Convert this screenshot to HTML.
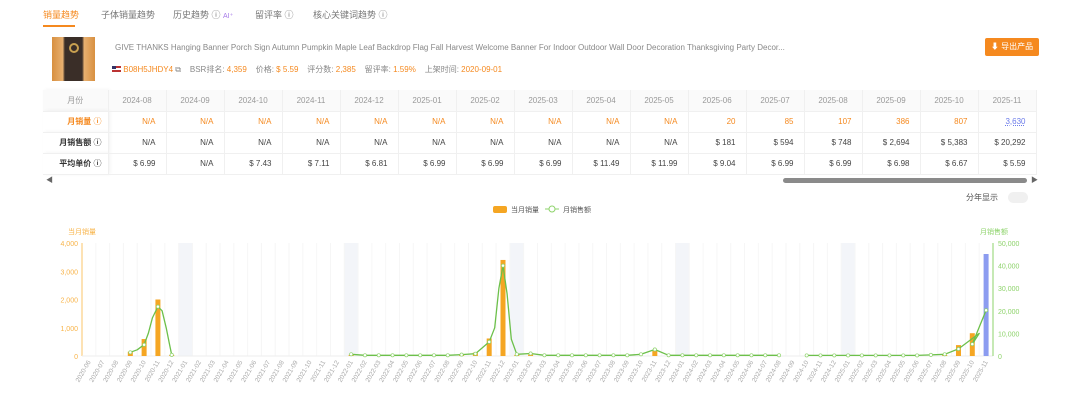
<!DOCTYPE html>
<html><head><meta charset="utf-8"><style>
*{margin:0;padding:0;box-sizing:border-box}
body{width:1080px;height:402px;background:#fff;font-family:"Liberation Sans","Noto Sans CJK SC",sans-serif;position:relative;overflow:hidden;color:#666}
.abs{position:absolute;white-space:nowrap}
.tab{font-size:9px;color:#777;top:8px}
.o{color:#f5891f}
table{border-collapse:collapse;position:absolute;left:43px;top:90px;font-size:8px}
td{height:21px;width:58px;text-align:right;padding-right:10px;border-right:1px solid #f0f0f0;border-bottom:1px solid #f0f0f0;color:#444}
tr:first-child td{background:#fafafa;color:#999;text-align:center;padding:0}
td.h{width:65px;text-align:right;padding-right:6px;font-weight:bold;color:#333;background:#fff;box-shadow:2px 0 4px rgba(0,0,0,.06)}
tr.r1 td{color:#f5891f}
</style></head><body>
<div class="abs tab o" style="left:43px">销量趋势</div>
<div style="position:absolute;left:43px;top:25px;width:32px;height:2px;background:#f5891f"></div>
<div class="abs tab" style="left:101px">子体销量趋势</div>
<div class="abs tab" style="left:173px">历史趋势 ⓘ <span style="color:#a77be8;font-size:7px">AI⁺</span></div>
<div class="abs tab" style="left:255px">留评率 ⓘ</div>
<div class="abs tab" style="left:313px">核心关键词趋势 ⓘ</div>
<div style="position:absolute;left:52px;top:37px;width:43px;height:44px;background:linear-gradient(90deg,#d89040,#e7b070 25%,#3a2e28 30%,#3a2e28 70%,#e7b070 75%,#d89040)"><div style="position:absolute;left:17px;top:6px;width:10px;height:10px;border-radius:50%;border:2px solid #c8a050"></div></div>
<div class="abs" style="left:115px;top:43px;font-size:8px;color:#888">GIVE THANKS Hanging Banner Porch Sign Autumn Pumpkin Maple Leaf Backdrop Flag Fall Harvest Welcome Banner For Indoor Outdoor Wall Door Decoration Thanksgiving Party Decor...</div>
<div class="abs" style="left:112px;top:64px;font-size:8px;color:#888"><span style="display:inline-block;width:9px;height:6px;background:linear-gradient(#b33 0 33%,#fff 33% 66%,#b33 66%);position:relative"><span style="position:absolute;left:0;top:0;width:4px;height:3px;background:#336"></span></span> <span class="o">B08H5JHDY4</span> ⧉ &nbsp;&nbsp; BSR排名: <span class="o">4,359</span> &nbsp;&nbsp; 价格: <span class="o">$ 5.59</span> &nbsp;&nbsp; 评分数: <span class="o">2,385</span> &nbsp;&nbsp; 留评率: <span class="o">1.59%</span> &nbsp;&nbsp; 上架时间: <span class="o">2020-09-01</span></div>
<div class="abs" style="left:985px;top:38px;width:54px;height:18px;background:#f5891f;border-radius:2px;color:#fff;font-size:8px;line-height:18px;text-align:center">⬇ 导出产品</div>
<table>
<tr><td class="h" style="text-align:center;color:#999;font-weight:normal;background:#fafafa">月份</td><td>2024-08</td><td>2024-09</td><td>2024-10</td><td>2024-11</td><td>2024-12</td><td>2025-01</td><td>2025-02</td><td>2025-03</td><td>2025-04</td><td>2025-05</td><td>2025-06</td><td>2025-07</td><td>2025-08</td><td>2025-09</td><td>2025-10</td><td>2025-11</td></tr>
<tr class="r1"><td class="h" style="color:#f5891f">月销量 ⓘ</td><td>N/A</td><td>N/A</td><td>N/A</td><td>N/A</td><td>N/A</td><td>N/A</td><td>N/A</td><td>N/A</td><td>N/A</td><td>N/A</td><td>20</td><td>85</td><td>107</td><td>386</td><td>807</td><td style="color:#6b7bea;text-decoration:underline dotted">3,630</td></tr>
<tr><td class="h">月销售额 ⓘ</td><td>N/A</td><td>N/A</td><td>N/A</td><td>N/A</td><td>N/A</td><td>N/A</td><td>N/A</td><td>N/A</td><td>N/A</td><td>N/A</td><td>$ 181</td><td>$ 594</td><td>$ 748</td><td>$ 2,694</td><td>$ 5,383</td><td>$ 20,292</td></tr>
<tr><td class="h">平均单价 ⓘ</td><td>$ 6.99</td><td>N/A</td><td>$ 7.43</td><td>$ 7.11</td><td>$ 6.81</td><td>$ 6.99</td><td>$ 6.99</td><td>$ 6.99</td><td>$ 11.49</td><td>$ 11.99</td><td>$ 9.04</td><td>$ 6.99</td><td>$ 6.99</td><td>$ 6.98</td><td>$ 6.67</td><td>$ 5.59</td></tr>
</table>
<div class="abs" style="left:46px;top:175px;font-size:7px;color:#666">◀</div>
<div class="abs" style="left:1031px;top:175px;font-size:7px;color:#666">▶</div>
<div style="position:absolute;left:783px;top:178px;width:244px;height:5px;border-radius:3px;background:#8a8a8a"></div>
<div class="abs" style="left:966px;top:192px;font-size:8px;color:#555">分年显示</div>
<div style="position:absolute;left:1008px;top:192px;width:20px;height:11px;border-radius:6px;background:#f0f0f0"></div>
<svg id="c" width="1080" height="402" style="position:absolute;left:0;top:0"></svg>
<script>
var s='',L=82,R=993,Y0=356,Y4=243,w=(R-L)/66;
function X(i){return L+w*(i+.5)}
function Yv(v){return Y0-(Y0-Y4)*v/4000}
[7,19,31,43,55].forEach(function(i){s+='<rect x="'+(L+w*i)+'" y="243" width="'+w+'" height="113" fill="#f3f5f9"/>'});
for(var i=0;i<=66;i++)s+='<line x1="'+(L+w*i)+'" y1="243" x2="'+(L+w*i)+'" y2="356" stroke="#f6f6f6"/>';
s+='<line x1="'+L+'" y1="243" x2="'+L+'" y2="356" stroke="#fbc66a"/><line x1="'+L+'" y1="356" x2="'+R+'" y2="356" stroke="#eee"/><line x1="'+R+'" y1="243" x2="'+R+'" y2="356" stroke="#8ed36b"/>';
['0','1,000','2,000','3,000','4,000'].forEach(function(t,k){var y=Yv(k*1000);s+='<text x="78" y="'+(y+3)+'" font-size="7" fill="#f8b44a" text-anchor="end">'+t+'</text>'});
['0','10,000','20,000','30,000','40,000','50,000'].forEach(function(t,k){var y=Y0-(Y0-Y4)*k/5;s+='<text x="998" y="'+(y+3)+'" font-size="7" fill="#8ed36b">'+t+'</text>'});
s+='<text x="68" y="234" font-size="7" fill="#f8b44a">当月销量</text><text x="980" y="234" font-size="7" fill="#8ed36b">月销售额</text>';
s+='<rect x="493" y="206" width="14" height="7" rx="2" fill="#f5a623"/><text x="511" y="212" font-size="7" fill="#555">当月销量</text><line x1="545" y1="209" x2="559" y2="209" stroke="#8ed36b"/><circle cx="552" cy="209" r="3" fill="#fff" stroke="#8ed36b"/><text x="563" y="212" font-size="7" fill="#555">月销售额</text>';
var bars={3:150,4:600,5:2000,6:40,19:40,22:20,27:40,28:120,29:620,30:3400,31:40,32:50,34:20,41:180,62:40,63:386,64:807};
for(var k in bars){var h=Y0-Yv(bars[k]);s+='<rect x="'+(X(+k)-2.5)+'" y="'+(Y0-h)+'" width="5" height="'+h+'" fill="#f5a623"/>'}
s+='<rect x="'+(X(65)-2.5)+'" y="254" width="5" height="102" fill="#8c9cf0"/>';
function seg(pts,dots){var d='';pts.forEach(function(p,j){d+=(j?'L':'M')+X(p[0]).toFixed(1)+','+Yv(p[1]).toFixed(1)});s+='<path d="'+d+'" fill="none" stroke="#6cc04a" stroke-width="1.3" stroke-linejoin="round"/>';pts.forEach(function(p){if(p[0]%1==0)s+='<circle cx="'+X(p[0])+'" cy="'+Yv(p[1])+'" r="1.6" fill="#fff" stroke="#8ed36b" stroke-width=".7"/>'})}
seg([[3,130],[3.5,220],[4,400],[4.3,800],[4.6,1350],[5,1750],[5.3,1600],[5.6,1000],[5.85,400],[6,40]]);
var a=[];for(var i=19;i<=50;i++){var v=25;if(i==19)v=60;if(i==27)v=50;if(i==28)v=80;if(i==29)v=500;if(i==30)v=3200;if(i==31)v=60;if(i==32)v=90;if(i==40)v=60;if(i==41)v=230;a.push([i,v]);if(i==29){a.push([29.4,1000]);a.push([29.7,2400]);}if(i==30){a.push([30.3,2200]);a.push([30.6,600]);}}
seg(a);
var b=[];for(var i=52;i<=65;i++){var v=20;if(i==61)v=40;if(i==62)v=60;if(i==63)v=250;if(i==64)v=420;if(i==65)v=1620;b.push([i,v])}b.splice(12,0,[64.5,800]);seg(b);
var mons=[];for(var y=2020;y<=2025;y++)for(var m=1;m<=12;m++){if(y==2020&&m<6)continue;if(y==2025&&m>11)continue;mons.push(y+'-'+(m<10?'0':'')+m)}
mons.forEach(function(t,i){var x=X(i)+2;s+='<text transform="translate('+x+',362) rotate(-60)" font-size="6.5" fill="#aaa" text-anchor="end">'+t+'</text>'});
document.getElementById('c').innerHTML=s;
</script>
</body></html>
